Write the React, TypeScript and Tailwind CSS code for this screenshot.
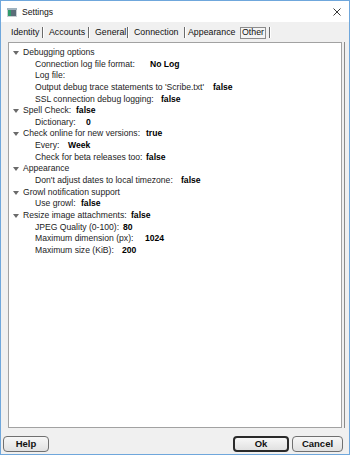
import React from "react";

type Child = [string, string, number];
type Group = { label: string; value?: string; w?: number; children: Child[] };

const groups: Group[] = [
  {
    label: "Debugging options",
    children: [
      ["Connection log file format:", "No Log", 115],
      ["Log file:", "", 0],
      ["Output debug trace statements to 'Scribe.txt'", "false", 178],
      ["SSL connection debug logging:", "false", 126],
    ],
  },
  { label: "Spell Check:", value: "false", w: 53, children: [["Dictionary:", "0", 51]] },
  {
    label: "Check online for new versions:",
    value: "true",
    w: 123,
    children: [
      ["Every:", "Week", 33],
      ["Check for beta releases too:", "false", 111],
    ],
  },
  { label: "Appearance", children: [["Don't adjust dates to local timezone:", "false", 146]] },
  { label: "Growl notification support", children: [["Use growl:", "false", 46]] },
  {
    label: "Resize image attachments:",
    value: "false",
    w: 108,
    children: [
      ["JPEG Quality (0-100):", "80", 88],
      ["Maximum dimension (px):", "1024", 110],
      ["Maximum size (KiB):", "200", 87],
    ],
  },
];

function Arrow() {
  return (
    <svg width="6" height="4" viewBox="0 0 6 4" className="shrink-0">
      <polygon points="0,0 6,0 3,4" fill="#6a6a6a" />
    </svg>
  );
}

function Row({ label, value, w }: { label: string; value?: string; w?: number }) {
  return (
    <div className="flex items-center">
      {value ? (
        <>
          <span className="whitespace-nowrap shrink-0 pr-[3px]" style={{ minWidth: w }}>
            {label}
          </span>
          <span className="font-bold text-black whitespace-nowrap">{value}</span>
        </>
      ) : (
        <span className="whitespace-nowrap">{label}</span>
      )}
    </div>
  );
}

function Sep() {
  return (
    <div className="flex h-[11px] self-center">
      <div className="w-px bg-[#6a6a6a]" />
      <div className="w-px bg-white" />
    </div>
  );
}

function Button({ label, w, primary }: { label: string; w: number; primary?: boolean }) {
  return (
    <div
      className={
        "h-[16px] flex items-center justify-center rounded-[4px] bg-gradient-to-b from-[#f7f7f7] to-[#e1e1e1] text-[9.5px] font-bold text-[#111] " +
        (primary ? "border-2 border-[#2a2a2a]" : "border border-[#707070]")
      }
      style={{ width: w }}
    >
      {label}
    </div>
  );
}

export default function App() {
  return (
    <div className="w-[350px] h-[455px] border border-[#6fa7dc] flex flex-col font-['Liberation_Sans',Arial,sans-serif] text-[#1c1c24] overflow-hidden">
      {/* Title bar */}
      <div className="h-[21px] bg-white flex items-center shrink-0">
        <svg width="10" height="9" viewBox="0 0 10 9" className="ml-[6px] mt-[2px]">
          <rect x="0" y="0" width="10" height="9" fill="#c9cfd3" />
          <rect x="1" y="2" width="3" height="6" fill="#2f9a6b" />
          <rect x="4" y="2" width="5" height="6" fill="#5b6d79" />
          <rect x="0" y="0" width="10" height="2" fill="#9fb2be" />
        </svg>
        <span className="ml-[5px] text-[8.6px] text-[#111] mt-[1px]">Settings</span>
        <div className="flex-1" />
        <svg width="8" height="8" viewBox="0 0 8 8" className="mr-[8px] mt-[1px]">
          <path d="M0.5 0.5 L7.5 7.5 M7.5 0.5 L0.5 7.5" stroke="#222" strokeWidth="0.9" />
        </svg>
      </div>

      {/* Body */}
      <div className="flex-1 bg-[#f0f0f0] flex flex-col">
        {/* Tabs */}
        <div className="h-[20px] pt-[4px] pl-[8px] flex items-start text-[8.8px] text-[#111]">
          <div className="flex h-[13px] items-stretch">
            <div className="w-[33px] pl-[2px] flex items-center">Identity</div>
            <Sep />
            <div className="w-[44px] pl-[5px] flex items-center">Accounts</div>
            <Sep />
            <div className="w-[37px] pl-[5px] flex items-center">General</div>
            <Sep />
            <div className="w-[55px] pl-[5px] flex items-center">Connection</div>
            <Sep />
            <div className="w-[54px] pl-[2px] flex items-center">Appearance</div>
            <div className="w-[26px] h-[12px] mt-[1px] border border-[#8c8c8c] bg-[#f4f4f4] flex items-center justify-center">
              Other
            </div>
            <div className="w-[3px]" />
            <Sep />
          </div>
        </div>

        {/* Panel row */}
        <div className="h-[386px] flex pl-[7px] pr-[4px]">
          <div className="flex-1 bg-white border border-[#a2a2a2] pt-[4px] text-[8.6px] leading-[11.65px]">
            {groups.map((g) => (
              <div key={g.label}>
                <div className="flex items-center h-[11.65px] pl-[4px] gap-[4px]">
                  <Arrow />
                  <Row label={g.label} value={g.value} w={g.w} />
                </div>
                {g.children.map((c) => (
                  <div key={c[0]} className="h-[11.65px] pl-[26px] flex items-center">
                    <Row label={c[0]} value={c[1]} w={c[2]} />
                  </div>
                ))}
              </div>
            ))}
          </div>
          <div className="w-[2px]" />
          <div className="w-px bg-[#8a8a8a]" />
        </div>

        <div className="h-[8px]" />

        {/* Buttons */}
        <div className="h-[16px] flex pl-[2px] pr-[6px]">
          <Button label="Help" w={46} />
          <div className="flex-1" />
          <Button label="Ok" w={56} primary />
          <div className="w-[3px]" />
          <Button label="Cancel" w={51} />
        </div>
      </div>
    </div>
  );
}
